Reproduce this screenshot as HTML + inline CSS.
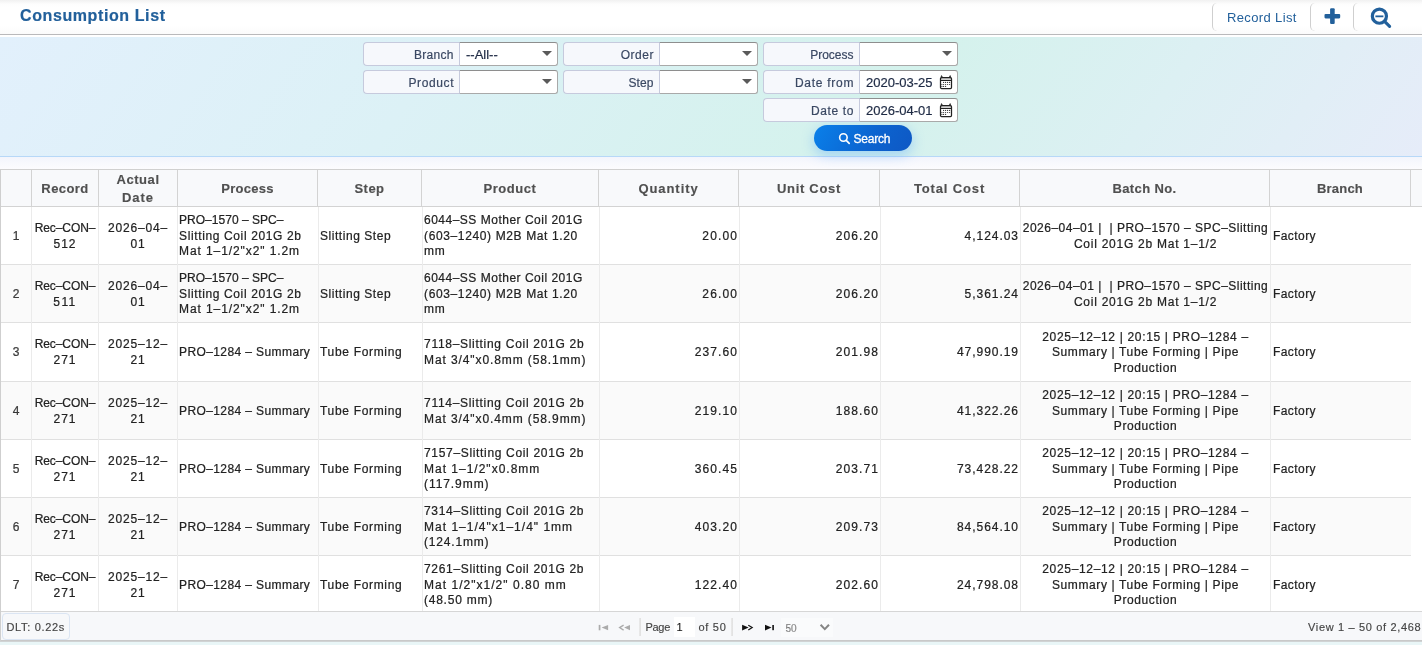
<!DOCTYPE html>
<html><head><meta charset="utf-8"><title>Consumption List</title>
<style>
*{box-sizing:border-box}
html,body{margin:0;padding:0}
body{width:1422px;height:645px;overflow:hidden;position:relative;font-family:"Liberation Sans",sans-serif;font-size:13px;color:#222;background:#fff}
.abs{position:absolute}
/* header */
.hdr{position:absolute;left:0;top:0;width:1422px;height:34px;background:linear-gradient(#f1f1f1 0,#fdfdfd 4px,#fff 8px,#fff 26px,#fbfbfb 34px)}
.hdrline{position:absolute;left:0;top:34px;width:1422px;height:1px;background:#b9b9bb}
.title{position:absolute;left:20px;top:6px;font-size:16px;font-weight:700;color:#22609b;-webkit-text-stroke:.2px #22609b;letter-spacing:.6px;line-height:20px;white-space:nowrap}
.hbtn{position:absolute;top:3px;height:28px;border-left:1px solid #cfcfcf;border-radius:5px 0 0 5px}
.hbtn.t{left:1212px;width:99px}
.hbtn.p{left:1310px;width:44px}
.hbtn.s{left:1353px;width:60px}
.rl{position:absolute;left:1227px;top:9px;font-size:13px;color:#22609b;letter-spacing:.36px;line-height:18px;white-space:nowrap}
/* filter panel */
.flt{position:absolute;left:0;top:37px;width:1422px;height:119px;background:linear-gradient(125deg,#e2f0fc 0%,#dcf1f6 30%,#d4f2ec 62%,#dcf0f3 80%,#e6ecf9 100%)}
.fltline{position:absolute;left:0;top:156px;width:1422px;height:1px;background:#b7d8f8}
.gap{position:absolute;left:0;top:157px;width:1422px;height:12px;background:linear-gradient(#f3f5fc,#fcfcfe)}
.fg{position:absolute;width:195px;height:24px}
.fg .lb{position:absolute;left:0;top:0;width:97px;height:24px;border:1px solid #c6cadd;border-right:none;border-radius:4px 0 0 4px;background:#f6f8fc;color:#3a4863;font-size:12px;line-height:24px;text-align:right;padding-right:6px;white-space:nowrap;-webkit-text-stroke:.2px #3a4863}
.fg .in{position:absolute;left:96px;top:0;width:99px;height:24px;border:1px solid #a9a9a9;border-top-color:#8e8e8e;border-left-color:#c6cadd;border-radius:0 3px 3px 0;background:#fff;color:#1e2a44;font-size:13px;line-height:24px;padding-left:6px;-webkit-text-stroke:.2px #1e2a44;white-space:nowrap}
.fg .arr{position:absolute;right:5px;top:8px;width:0;height:0;border-left:5px solid transparent;border-right:5px solid transparent;border-top:5.3px solid #5a5a5a}
.sbtn{position:absolute;left:814px;top:125px;width:98px;height:26px;border-radius:13px;background:linear-gradient(120deg,#0a80ea,#0c63cf 60%,#0e58c4);box-shadow:0 4px 12px 1px rgba(90,165,255,.38);color:#fff;font-size:12px;line-height:26px;white-space:nowrap}
.sbtn span{position:absolute;left:39.6px;top:1px;letter-spacing:-.25px;-webkit-text-stroke:.3px #fff}
/* grid */
.grid{position:absolute;left:0;top:169px;width:1422px;height:443px}
.gline-l{position:absolute;left:0;top:169px;width:1px;height:472px;background:#cfcfcf}
.ghead{position:absolute;left:0;top:0;width:1422px;height:38px;background:#f8f9fb;border-top:1px solid #d0d0d0;border-bottom:1px solid #d3d3d3}
.th{position:absolute;top:0;height:36px;padding-top:1px;border-right:1px solid #d3d3d3;display:flex;align-items:center;justify-content:center;text-align:center;font-weight:700;font-size:13px;color:#505050;-webkit-text-stroke:.15px #505050;line-height:18px;white-space:nowrap;box-sizing:content-box}
.tr{position:absolute;left:0;width:1411px;background:#fff;border-bottom:1px solid #e0e0e0;box-sizing:content-box}
.tr.alt{background:#fafafa}
.td{position:absolute;top:0;height:100%;padding-top:1px;-webkit-text-stroke:.22px #222;border-right:1px solid #ebebeb;display:flex;align-items:center;font-size:12px;line-height:15.6px;color:#222;white-space:nowrap;box-sizing:content-box;overflow:hidden}
.td.c{justify-content:center;text-align:center}
.td.l{justify-content:flex-start;text-align:left}
.td.l span{padding-left:1px}
.td.r{justify-content:flex-end;text-align:right}
.td.r span{padding-right:1px}
.td.rn{color:#444}
.td.last{border-right:none}
.td.last span{padding-left:2px}
/* pager */
.pager{position:absolute;left:0;top:611px;width:1422px;height:30px;background:#f7f8fa;border-top:1px solid #d6d6d6;border-bottom:1px solid #c9c9c9;font-size:11px;color:#444}
.foot{position:absolute;left:0;top:641px;width:1422px;height:4px;background:linear-gradient(#d0d3d4 0,#d0d3d4 1px,#e9f6f7 1px)}
.dlt{position:absolute;left:2px;top:1px;width:68px;height:27px;border:1px solid #dbe5f3;border-radius:4px;background:#f7f8fa;line-height:26px;padding-left:3.4px;letter-spacing:.68px;white-space:nowrap;-webkit-text-stroke:.15px #444}
.pt{position:absolute;top:0;line-height:30px;white-space:nowrap;-webkit-text-stroke:.15px #444}
.psep{position:absolute;top:6px;width:2px;height:18px;background:linear-gradient(90deg,#eaeaea,#e0e0e0)}

.th i,.td i{display:block;font-style:normal;white-space:pre}
#wrap{position:absolute;left:0;top:0;width:1422px;height:645px;will-change:transform}

</style></head>
<body>
<div id="wrap">
<div class="hdr"></div><div class="hdrline"></div>
<div class="title">Consumption List</div>
<div class="hbtn t"></div><div class="hbtn p"></div><div class="hbtn s"></div>
<div class="rl">Record List</div>
<svg class="abs" style="left:1324px;top:8px" width="17" height="17" viewBox="0 0 17 17"><rect x="6.1" y="0.2" width="4.6" height="15.8" rx="1.1" fill="#22609b"/><rect x="0.5" y="5.9" width="15.7" height="4.5" rx="1.1" fill="#22609b"/></svg>
<svg class="abs" style="left:1370px;top:7px" width="22" height="22" viewBox="0 0 22 22"><circle cx="9.4" cy="9.2" r="7.05" fill="none" stroke="#22609b" stroke-width="3.2"/><path d="M14.8 14.6l4.8 4.8" stroke="#22609b" stroke-width="3.1" stroke-linecap="round"/><path d="M5.4 9.35h8" stroke="#22609b" stroke-width="1.8"/></svg>
<div class="flt"></div><div class="fltline"></div><div class="gap"></div>
<div class="fg" style="left:363px;top:42px"><div class="lb" style="letter-spacing:0.3px;padding-right:6.20px">Branch</div><div class="in">--All--<i class="arr"></i></div></div>
<div class="fg" style="left:563px;top:42px"><div class="lb" style="letter-spacing:0.55px;padding-right:5.95px">Order</div><div class="in"><i class="arr"></i></div></div>
<div class="fg" style="left:763px;top:42px"><div class="lb" style="letter-spacing:0px;padding-right:6.50px">Process</div><div class="in"><i class="arr"></i></div></div>
<div class="fg" style="left:363px;top:70px"><div class="lb" style="letter-spacing:0.62px;padding-right:5.88px">Product</div><div class="in"><i class="arr"></i></div></div>
<div class="fg" style="left:563px;top:70px"><div class="lb" style="letter-spacing:0.12px;padding-right:6.38px">Step</div><div class="in"><i class="arr"></i></div></div>
<div class="fg" style="left:763px;top:70px"><div class="lb" style="letter-spacing:0.74px;padding-right:5.76px">Date from</div><div class="in">2020-03-25<svg class="abs" style="left:79px;top:4px" width="14" height="15" viewBox="0 0 14 15"><path d="M1.9 2.4L2.5 0.5L3.6 2.4zM10.1 2.4L11.2 0.5L11.8 2.4z" fill="#222" stroke="#222" stroke-width=".6"/><rect x="1.6" y="2.7" width="10.8" height="2.6" fill="#d4d4d4"/><rect x="1.5" y="2.6" width="11" height="10.9" rx="1.1" fill="none" stroke="#222" stroke-width="1.25"/><path d="M1.5 5.5h11" stroke="#222" stroke-width="1"/><g fill="#333"><circle cx="4.6" cy="7.4" r=".6"/><circle cx="6.6" cy="7.4" r=".6"/><circle cx="8.6" cy="7.4" r=".6"/><circle cx="10.6" cy="7.4" r=".6"/><circle cx="2.9" cy="9.5" r=".6"/><circle cx="4.6" cy="9.5" r=".6"/><circle cx="6.6" cy="9.5" r=".6"/><circle cx="8.6" cy="9.5" r=".6"/><circle cx="10.6" cy="9.5" r=".6"/><circle cx="2.9" cy="11.4" r=".6"/><circle cx="4.6" cy="11.4" r=".6"/><circle cx="6.6" cy="11.4" r=".6"/></g></svg></div></div>
<div class="fg" style="left:763px;top:98px"><div class="lb" style="letter-spacing:0.64px;padding-right:5.86px">Date to</div><div class="in">2026-04-01<svg class="abs" style="left:79px;top:4px" width="14" height="15" viewBox="0 0 14 15"><path d="M1.9 2.4L2.5 0.5L3.6 2.4zM10.1 2.4L11.2 0.5L11.8 2.4z" fill="#222" stroke="#222" stroke-width=".6"/><rect x="1.6" y="2.7" width="10.8" height="2.6" fill="#d4d4d4"/><rect x="1.5" y="2.6" width="11" height="10.9" rx="1.1" fill="none" stroke="#222" stroke-width="1.25"/><path d="M1.5 5.5h11" stroke="#222" stroke-width="1"/><g fill="#333"><circle cx="4.6" cy="7.4" r=".6"/><circle cx="6.6" cy="7.4" r=".6"/><circle cx="8.6" cy="7.4" r=".6"/><circle cx="10.6" cy="7.4" r=".6"/><circle cx="2.9" cy="9.5" r=".6"/><circle cx="4.6" cy="9.5" r=".6"/><circle cx="6.6" cy="9.5" r=".6"/><circle cx="8.6" cy="9.5" r=".6"/><circle cx="10.6" cy="9.5" r=".6"/><circle cx="2.9" cy="11.4" r=".6"/><circle cx="4.6" cy="11.4" r=".6"/><circle cx="6.6" cy="11.4" r=".6"/></g></svg></div></div>
<div class="sbtn"><svg class="abs" style="left:24px;top:7px" width="13" height="13" viewBox="0 0 13 13"><circle cx="5.4" cy="5.5" r="3.75" fill="none" stroke="#fff" stroke-width="1.6"/><path d="M8.2 8.3l3 3" stroke="#fff" stroke-width="1.7" stroke-linecap="round"/></svg><span>Search</span></div>

<div class="grid">
<div class="ghead">
<div class="th" style="left:1px;width:30px"><span></span></div>
<div class="th" style="left:32px;width:66px"><span><i style="letter-spacing:0.42px">Record</i></span></div>
<div class="th" style="left:99px;width:78px"><span><i style="letter-spacing:0.57px">Actual</i><i style="letter-spacing:1.0px">Date</i></span></div>
<div class="th" style="left:178px;width:139px"><span><i style="letter-spacing:0.25px">Process</i></span></div>
<div class="th" style="left:318px;width:103px"><span><i style="letter-spacing:0.48px">Step</i></span></div>
<div class="th" style="left:422px;width:176px"><span><i style="letter-spacing:0.56px">Product</i></span></div>
<div class="th" style="left:599px;width:139px"><span><i style="letter-spacing:0.94px">Quantity</i></span></div>
<div class="th" style="left:739px;width:140px"><span><i style="letter-spacing:0.69px">Unit Cost</i></span></div>
<div class="th" style="left:880px;width:139px"><span><i style="letter-spacing:0.86px">Total Cost</i></span></div>
<div class="th" style="left:1020px;width:249px"><span><i style="letter-spacing:0.39px">Batch No.</i></span></div>
<div class="th" style="left:1270px;width:140px"><span><i style="letter-spacing:0.2px">Branch</i></span></div>
</div>
<div class="tr" style="top:38px;height:57px">
<div class="td c rn" style="left:1px;width:30px"><span><i>1</i></span></div>
<div class="td c" style="left:32px;width:66px"><span><i style="letter-spacing:-0.09px">Rec–CON–</i><i style="letter-spacing:0.93px">512</i></span></div>
<div class="td c" style="left:99px;width:78px"><span><i style="letter-spacing:0.84px">2026–04–</i><i style="letter-spacing:0.8px">01</i></span></div>
<div class="td l" style="left:178px;width:140px"><span><i style="letter-spacing:0.03px">PRO–1570 – SPC–</i><i style="letter-spacing:0.63px">Slitting Coil 201G 2b</i><i style="letter-spacing:0.91px">Mat 1–1/2"x2" 1.2m</i></span></div>
<div class="td l" style="left:319px;width:103px"><span><i style="letter-spacing:0.55px">Slitting Step</i></span></div>
<div class="td l" style="left:423px;width:176px"><span><i style="letter-spacing:0.5px">6044–SS Mother Coil 201G</i><i style="letter-spacing:0.63px">(603–1240) M2B Mat 1.20</i><i style="letter-spacing:0.8px">mm</i></span></div>
<div class="td r" style="left:600px;width:139px"><span><i style="letter-spacing:1.12px">20.00</i></span></div>
<div class="td r" style="left:740px;width:140px"><span><i style="letter-spacing:1.08px">206.20</i></span></div>
<div class="td r" style="left:881px;width:139px"><span><i style="letter-spacing:0.96px">4,124.03</i></span></div>
<div class="td c" style="left:1021px;width:249px"><span><i style="letter-spacing:0.49px">2026–04–01 |&nbsp; | PRO–1570 – SPC–Slitting</i><i style="letter-spacing:0.75px">Coil 201G 2b Mat 1–1/2</i></span></div>
<div class="td l last" style="left:1271px;width:139px"><span><i style="letter-spacing:0.43px">Factory</i></span></div>
</div>
<div class="tr alt" style="top:96px;height:57px">
<div class="td c rn" style="left:1px;width:30px"><span><i>2</i></span></div>
<div class="td c" style="left:32px;width:66px"><span><i style="letter-spacing:-0.09px">Rec–CON–</i><i style="letter-spacing:1.38px">511</i></span></div>
<div class="td c" style="left:99px;width:78px"><span><i style="letter-spacing:0.84px">2026–04–</i><i style="letter-spacing:0.8px">01</i></span></div>
<div class="td l" style="left:178px;width:140px"><span><i style="letter-spacing:0.03px">PRO–1570 – SPC–</i><i style="letter-spacing:0.63px">Slitting Coil 201G 2b</i><i style="letter-spacing:0.91px">Mat 1–1/2"x2" 1.2m</i></span></div>
<div class="td l" style="left:319px;width:103px"><span><i style="letter-spacing:0.55px">Slitting Step</i></span></div>
<div class="td l" style="left:423px;width:176px"><span><i style="letter-spacing:0.5px">6044–SS Mother Coil 201G</i><i style="letter-spacing:0.63px">(603–1240) M2B Mat 1.20</i><i style="letter-spacing:0.8px">mm</i></span></div>
<div class="td r" style="left:600px;width:139px"><span><i style="letter-spacing:1.12px">26.00</i></span></div>
<div class="td r" style="left:740px;width:140px"><span><i style="letter-spacing:1.08px">206.20</i></span></div>
<div class="td r" style="left:881px;width:139px"><span><i style="letter-spacing:0.96px">5,361.24</i></span></div>
<div class="td c" style="left:1021px;width:249px"><span><i style="letter-spacing:0.49px">2026–04–01 |&nbsp; | PRO–1570 – SPC–Slitting</i><i style="letter-spacing:0.75px">Coil 201G 2b Mat 1–1/2</i></span></div>
<div class="td l last" style="left:1271px;width:139px"><span><i style="letter-spacing:0.43px">Factory</i></span></div>
</div>
<div class="tr" style="top:154px;height:58px">
<div class="td c rn" style="left:1px;width:30px"><span><i>3</i></span></div>
<div class="td c" style="left:32px;width:66px"><span><i style="letter-spacing:-0.09px">Rec–CON–</i><i style="letter-spacing:0.93px">271</i></span></div>
<div class="td c" style="left:99px;width:78px"><span><i style="letter-spacing:0.84px">2025–12–</i><i style="letter-spacing:0.8px">21</i></span></div>
<div class="td l" style="left:178px;width:140px"><span><i style="letter-spacing:0.4px">PRO–1284 – Summary</i></span></div>
<div class="td l" style="left:319px;width:103px"><span><i style="letter-spacing:0.68px">Tube Forming</i></span></div>
<div class="td l" style="left:423px;width:176px"><span><i style="letter-spacing:0.71px">7118–Slitting Coil 201G 2b</i><i style="letter-spacing:0.9px">Mat 3/4"x0.8mm (58.1mm)</i></span></div>
<div class="td r" style="left:600px;width:139px"><span><i style="letter-spacing:1.08px">237.60</i></span></div>
<div class="td r" style="left:740px;width:140px"><span><i style="letter-spacing:1.08px">201.98</i></span></div>
<div class="td r" style="left:881px;width:139px"><span><i style="letter-spacing:0.96px">47,990.19</i></span></div>
<div class="td c" style="left:1021px;width:249px"><span><i style="letter-spacing:0.67px">2025–12–12 | 20:15 | PRO–1284 –</i><i style="letter-spacing:0.63px">Summary | Tube Forming | Pipe</i><i style="letter-spacing:0.6px">Production</i></span></div>
<div class="td l last" style="left:1271px;width:139px"><span><i style="letter-spacing:0.43px">Factory</i></span></div>
</div>
<div class="tr alt" style="top:213px;height:57px">
<div class="td c rn" style="left:1px;width:30px"><span><i>4</i></span></div>
<div class="td c" style="left:32px;width:66px"><span><i style="letter-spacing:-0.09px">Rec–CON–</i><i style="letter-spacing:0.93px">271</i></span></div>
<div class="td c" style="left:99px;width:78px"><span><i style="letter-spacing:0.84px">2025–12–</i><i style="letter-spacing:0.8px">21</i></span></div>
<div class="td l" style="left:178px;width:140px"><span><i style="letter-spacing:0.4px">PRO–1284 – Summary</i></span></div>
<div class="td l" style="left:319px;width:103px"><span><i style="letter-spacing:0.68px">Tube Forming</i></span></div>
<div class="td l" style="left:423px;width:176px"><span><i style="letter-spacing:0.71px">7114–Slitting Coil 201G 2b</i><i style="letter-spacing:0.9px">Mat 3/4"x0.4mm (58.9mm)</i></span></div>
<div class="td r" style="left:600px;width:139px"><span><i style="letter-spacing:1.08px">219.10</i></span></div>
<div class="td r" style="left:740px;width:140px"><span><i style="letter-spacing:1.08px">188.60</i></span></div>
<div class="td r" style="left:881px;width:139px"><span><i style="letter-spacing:0.96px">41,322.26</i></span></div>
<div class="td c" style="left:1021px;width:249px"><span><i style="letter-spacing:0.67px">2025–12–12 | 20:15 | PRO–1284 –</i><i style="letter-spacing:0.63px">Summary | Tube Forming | Pipe</i><i style="letter-spacing:0.6px">Production</i></span></div>
<div class="td l last" style="left:1271px;width:139px"><span><i style="letter-spacing:0.43px">Factory</i></span></div>
</div>
<div class="tr" style="top:271px;height:57px">
<div class="td c rn" style="left:1px;width:30px"><span><i>5</i></span></div>
<div class="td c" style="left:32px;width:66px"><span><i style="letter-spacing:-0.09px">Rec–CON–</i><i style="letter-spacing:0.93px">271</i></span></div>
<div class="td c" style="left:99px;width:78px"><span><i style="letter-spacing:0.84px">2025–12–</i><i style="letter-spacing:0.8px">21</i></span></div>
<div class="td l" style="left:178px;width:140px"><span><i style="letter-spacing:0.4px">PRO–1284 – Summary</i></span></div>
<div class="td l" style="left:319px;width:103px"><span><i style="letter-spacing:0.68px">Tube Forming</i></span></div>
<div class="td l" style="left:423px;width:176px"><span><i style="letter-spacing:0.67px">7157–Slitting Coil 201G 2b</i><i style="letter-spacing:1.0px">Mat 1–1/2"x0.8mm</i><i style="letter-spacing:0.93px">(117.9mm)</i></span></div>
<div class="td r" style="left:600px;width:139px"><span><i style="letter-spacing:1.08px">360.45</i></span></div>
<div class="td r" style="left:740px;width:140px"><span><i style="letter-spacing:1.08px">203.71</i></span></div>
<div class="td r" style="left:881px;width:139px"><span><i style="letter-spacing:0.96px">73,428.22</i></span></div>
<div class="td c" style="left:1021px;width:249px"><span><i style="letter-spacing:0.67px">2025–12–12 | 20:15 | PRO–1284 –</i><i style="letter-spacing:0.63px">Summary | Tube Forming | Pipe</i><i style="letter-spacing:0.6px">Production</i></span></div>
<div class="td l last" style="left:1271px;width:139px"><span><i style="letter-spacing:0.43px">Factory</i></span></div>
</div>
<div class="tr alt" style="top:329px;height:57px">
<div class="td c rn" style="left:1px;width:30px"><span><i>6</i></span></div>
<div class="td c" style="left:32px;width:66px"><span><i style="letter-spacing:-0.09px">Rec–CON–</i><i style="letter-spacing:0.93px">271</i></span></div>
<div class="td c" style="left:99px;width:78px"><span><i style="letter-spacing:0.84px">2025–12–</i><i style="letter-spacing:0.8px">21</i></span></div>
<div class="td l" style="left:178px;width:140px"><span><i style="letter-spacing:0.4px">PRO–1284 – Summary</i></span></div>
<div class="td l" style="left:319px;width:103px"><span><i style="letter-spacing:0.68px">Tube Forming</i></span></div>
<div class="td l" style="left:423px;width:176px"><span><i style="letter-spacing:0.67px">7314–Slitting Coil 201G 2b</i><i style="letter-spacing:1.01px">Mat 1–1/4"x1–1/4" 1mm</i><i style="letter-spacing:0.82px">(124.1mm)</i></span></div>
<div class="td r" style="left:600px;width:139px"><span><i style="letter-spacing:1.08px">403.20</i></span></div>
<div class="td r" style="left:740px;width:140px"><span><i style="letter-spacing:1.08px">209.73</i></span></div>
<div class="td r" style="left:881px;width:139px"><span><i style="letter-spacing:0.96px">84,564.10</i></span></div>
<div class="td c" style="left:1021px;width:249px"><span><i style="letter-spacing:0.67px">2025–12–12 | 20:15 | PRO–1284 –</i><i style="letter-spacing:0.63px">Summary | Tube Forming | Pipe</i><i style="letter-spacing:0.6px">Production</i></span></div>
<div class="td l last" style="left:1271px;width:139px"><span><i style="letter-spacing:0.43px">Factory</i></span></div>
</div>
<div class="tr" style="top:387px;height:57px">
<div class="td c rn" style="left:1px;width:30px"><span><i>7</i></span></div>
<div class="td c" style="left:32px;width:66px"><span><i style="letter-spacing:-0.09px">Rec–CON–</i><i style="letter-spacing:0.93px">271</i></span></div>
<div class="td c" style="left:99px;width:78px"><span><i style="letter-spacing:0.84px">2025–12–</i><i style="letter-spacing:0.8px">21</i></span></div>
<div class="td l" style="left:178px;width:140px"><span><i style="letter-spacing:0.4px">PRO–1284 – Summary</i></span></div>
<div class="td l" style="left:319px;width:103px"><span><i style="letter-spacing:0.68px">Tube Forming</i></span></div>
<div class="td l" style="left:423px;width:176px"><span><i style="letter-spacing:0.67px">7261–Slitting Coil 201G 2b</i><i style="letter-spacing:1.03px">Mat 1/2"x1/2" 0.80 mm</i><i style="letter-spacing:0.76px">(48.50 mm)</i></span></div>
<div class="td r" style="left:600px;width:139px"><span><i style="letter-spacing:1.08px">122.40</i></span></div>
<div class="td r" style="left:740px;width:140px"><span><i style="letter-spacing:1.08px">202.60</i></span></div>
<div class="td r" style="left:881px;width:139px"><span><i style="letter-spacing:0.96px">24,798.08</i></span></div>
<div class="td c" style="left:1021px;width:249px"><span><i style="letter-spacing:0.67px">2025–12–12 | 20:15 | PRO–1284 –</i><i style="letter-spacing:0.63px">Summary | Tube Forming | Pipe</i><i style="letter-spacing:0.6px">Production</i></span></div>
<div class="td l last" style="left:1271px;width:139px"><span><i style="letter-spacing:0.43px">Factory</i></span></div>
</div>
</div>
<div class="pager">
<div class="dlt">DLT: 0.22s</div>
<svg class="abs" style="left:598px;top:12px" width="34" height="8" viewBox="0 0 34 8"><g fill="#ababab"><rect x="0.7" y="0.9" width="1.7" height="5.4"/><path d="M3.6 3.6L10.1 0.9V6.3z"/><path d="M26.1 3.6L32 0.9V6.3z"/></g><path d="M25.6 1.1L21.6 3.6L25.6 6.1" fill="none" stroke="#ababab" stroke-width="1.3"/></svg>
<div class="psep" style="left:639px"></div>
<div class="pt" style="left:645.5px;letter-spacing:-.3px">Page</div>
<div class="abs" style="left:674px;top:5px;width:21px;height:20px;background:#fff"></div>
<div class="pt" style="left:676.5px;color:#111">1</div>
<div class="pt" style="left:698.5px;letter-spacing:.7px">of 50</div>
<div class="psep" style="left:731px"></div>
<svg class="abs" style="left:741px;top:12px" width="34" height="8" viewBox="0 0 34 8"><g fill="#111"><path d="M1.1 0.8L7.6 3.6L1.1 6.4z"/><path d="M24 0.8L30.5 3.6L24 6.4z"/><rect x="31.3" y="1" width="1.6" height="5.2"/></g><path d="M7.3 1.2L11.2 3.6L7.3 6" fill="none" stroke="#111" stroke-width="1.2"/></svg>
<div class="abs" style="left:781px;top:6px;width:52px;height:19px;background:#fafbfc"></div>
<div class="pt" style="left:785.5px;top:1.5px;color:#999;font-size:10px">50</div>
<svg class="abs" style="left:819px;top:11px" width="12" height="8" viewBox="0 0 12 8"><path d="M1.6 1.7L5.8 6.1L10 1.7" fill="none" stroke="#858585" stroke-width="2"/></svg>
<div class="pt" style="left:1308px;letter-spacing:.66px">View 1 – 50 of 2,468</div>
</div>
<div class="foot"></div>
<div class="gline-l"></div>

</div>
</body></html>
